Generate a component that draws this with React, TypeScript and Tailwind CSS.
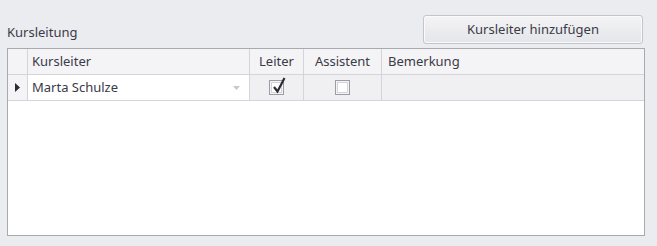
import React from 'react';

const font = { fontFamily: '"Noto Sans", "Open Sans", sans-serif' };

const CheckBox: React.FC<{ checked?: boolean }> = ({ checked }) => (
  <div className="relative w-[15px] h-[15px] border border-[#9c9ca6] bg-[#f4f4f6] flex items-center justify-center">
    <div className="w-[11px] h-[11px] border border-[#d4d4da] bg-white" />
    {checked && (
      <svg className="absolute left-[2px] top-[-4px]" width="14" height="17" viewBox="0 0 14 17">
        <path d="M2 10 L5.5 14.5 L12.5 1" fill="none" stroke="#2b2b33" strokeWidth="2.2" strokeLinejoin="miter" />
      </svg>
    )}
  </div>
);

export default function App() {
  return (
    <div className="w-[657px] h-[246px] bg-[#ebecf0] text-[#3a3a48] text-[13px] overflow-hidden" style={font}>
      <div className="flex items-end justify-between pl-[7px] pr-[14px] pt-[15px]">
        <div className="leading-none pb-[5px]">Kursleitung</div>
        <button className="w-[220px] h-[29px] rounded-[3px] border border-[#c4c5cc] bg-gradient-to-b from-[#f4f4f6] to-[#e4e5e9] shadow-[inset_0_0_0_1px_#fafafc] text-[13px] text-[#3a3a48]">
          Kursleiter hinzufügen
        </button>
      </div>

      <div className="ml-[7px] mt-[4px] w-[638px] h-[188px] border border-[#a9a9b0] bg-white flex flex-col">
        {/* header */}
        <div className="flex h-[26px] bg-[#f4f4f6] border-b border-[#d4d4da]">
          <div className="w-[20px] border-r border-[#d4d4da]" />
          <div className="w-[222px] border-r border-[#d4d4da] pl-[4px] flex items-center">Kursleiter</div>
          <div className="w-[54px] border-r border-[#d4d4da] flex items-center justify-center">Leiter</div>
          <div className="w-[78px] border-r border-[#d4d4da] flex items-center justify-center">Assistent</div>
          <div className="flex-1 pl-[6px] flex items-center">Bemerkung</div>
        </div>
        {/* row */}
        <div className="flex h-[26px] bg-[#f0f0f2] border-b border-[#d4d4da]">
          <div className="w-[20px] border-r border-[#d4d4da] flex items-center justify-center bg-[#f4f4f6]">
            <svg width="5" height="9" viewBox="0 0 5 9">
              <path d="M0 0 L5 4.5 L0 9 Z" fill="#2b2b33" />
            </svg>
          </div>
          <div className="w-[222px] border-r border-[#d4d4da] pl-[4px] pr-[9px] flex items-center justify-between bg-white">
            <span>Marta Schulze</span>
            <svg width="7" height="4" viewBox="0 0 7 4">
              <path d="M0 0 L7 0 L3.5 4 Z" fill="#c8c8ce" />
            </svg>
          </div>
          <div className="w-[54px] border-r border-[#d4d4da] flex items-center justify-center">
            <CheckBox checked />
          </div>
          <div className="w-[78px] border-r border-[#d4d4da] flex items-center justify-center">
            <CheckBox />
          </div>
          <div className="flex-1" />
        </div>
        <div className="flex-1 bg-white" />
      </div>
    </div>
  );
}
